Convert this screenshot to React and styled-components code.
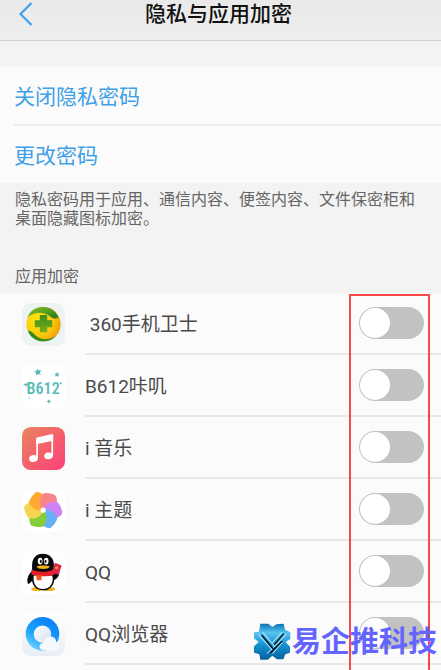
import styled, { createGlobalStyle } from "styled-components";

const apps = [
  { id: "guard", name: "\u00a0360手机卫士", Icon: GuardIcon },
  { id: "b612", name: "B612咔叽", Icon: CameraIcon },
  { id: "music", name: "i 音乐", Icon: MusicIcon },
  { id: "theme", name: "i 主题", Icon: ThemeIcon },
  { id: "qq", name: "QQ", Icon: PenguinIcon },
  { id: "browser", name: "QQ浏览器", Icon: BrowserIcon },
];

export default function App() {
  return (
    <>
      <GlobalStyle />
      <Page>
        <Header>
          <BackButton type="button" aria-label="返回">
            <svg width="14" height="24" viewBox="0 0 14 24" fill="none">
              <path d="M12.5 1 1.5 12l11 11" stroke="#3fa0f0" strokeWidth="2.2" />
            </svg>
          </BackButton>
          <Title>隐私与应用加密</Title>
        </Header>
        <Actions>
          <ActionLink href="#close">关闭隐私密码</ActionLink>
          <ActionLink href="#change">更改密码</ActionLink>
        </Actions>
        <Note>隐私密码用于应用、通信内容、便签内容、文件保密柜和桌面隐藏图标加密。</Note>
        <SectionTitle>应用加密</SectionTitle>
        <AppList>
          {apps.map(({ id, name, Icon }) => (
            <AppRow key={id}>
              <Icon />
              <RowBody>
                <AppName htmlFor={id}>{name}</AppName>
                <Toggle type="checkbox" id={id} />
              </RowBody>
            </AppRow>
          ))}
          <Highlight />
        </AppList>
        <Watermark>
          <WatermarkLogo />
          易企推科技
        </Watermark>
      </Page>
    </>
  );
}

function GuardIcon() {
  return (
    <AppIcon viewBox="0 0 128 128">
      <defs>
        <radialGradient id="gold" cx="0.35" cy="0.4" r="0.7">
          <stop offset="0" stopColor="#ffe910" />
          <stop offset="0.6" stopColor="#fcc90c" />
          <stop offset="1" stopColor="#f09a08" />
        </radialGradient>
        <linearGradient id="leaf" x1="0" y1="0" x2="1" y2="1">
          <stop offset="0" stopColor="#8cc020" />
          <stop offset="1" stopColor="#1c7a20" />
        </linearGradient>
        <linearGradient id="cross" x1="0" y1="0" x2="0" y2="1">
          <stop offset="0" stopColor="#3f8f1d" />
          <stop offset="1" stopColor="#75ad1a" />
        </linearGradient>
      </defs>
      <rect width="128" height="128" rx="26" fill="#edf2f3" />
      <circle cx="64" cy="63" r="51" fill="url(#gold)" />
      <path d="M17 42C27 18 47 11 65 12c22 1 38 14 43 31-8 5-15 4-24-3C65 26 39 25 17 42Z" fill="url(#leaf)" />
      <path d="M18 83c6-1 13 4 21 12 16 15 41 19 65 0-12 14-25 19-41 19-21 0-39-13-45-31Z" fill="#348b1c" />
      <path
        d="M55 38h18v15h15v17H73v15H55V70H40V53h15Z"
        fill="url(#cross)"
        stroke="url(#cross)"
        strokeWidth="4"
        strokeLinejoin="round"
      />
    </AppIcon>
  );
}

function CameraIcon() {
  return (
    <AppIcon viewBox="0 0 128 128">
      <rect width="128" height="128" rx="26" fill="#fff" />
      <g fill="#55b9b5">
        <LogoText x="63" y="85" textAnchor="middle">
          B612
        </LogoText>
        <path d="m46 10 3 6 8-1-4 7 3 7-8-2-7 4 1-8-6-5 8-1ZM104 20l2 5 6 1-4 4 1 5-5-2-5 2 1-5-4-4 6-1ZM12 52l2 4 5 3-5 2-2 5-2-5-5-2 5-3ZM80 102l2 4 5 3-5 2-2 5-2-5-5-2 5-3Z" />
        <circle cx="115" cy="54" r="3" />
        <circle cx="21" cy="99" r="2" />
      </g>
    </AppIcon>
  );
}

function MusicIcon() {
  return (
    <AppIcon viewBox="0 0 128 128">
      <defs>
        <linearGradient id="coral" x1="0" y1="0" x2="1" y2="1">
          <stop offset="0" stopColor="#e8865f" />
          <stop offset="0.5" stopColor="#f4616a" />
          <stop offset="1" stopColor="#fc4079" />
        </linearGradient>
      </defs>
      <rect width="128" height="128" rx="26" fill="url(#coral)" />
      <path d="M42 35q0-3 3-4l45-10q3 0 3 3v17L42 51Z" fill="#fff" />
      <path d="M45 40v53M90 28v57" stroke="#fff" strokeWidth="5" />
      <ellipse cx="34" cy="94" rx="13" ry="10" fill="#fff" transform="rotate(-12 34 94)" />
      <ellipse cx="79" cy="86" rx="13" ry="10" fill="#fff" transform="rotate(-12 79 86)" />
    </AppIcon>
  );
}

const petals = [
  { color: "#f9858c", edge: "#ee6270", angle: 0 },
  { color: "#cc84f6", edge: "#a866ea", angle: 60 },
  { color: "#66b0f6", edge: "#4a8ce6", angle: 120 },
  { color: "#86cc36", edge: "#4dab2c", angle: 180 },
  { color: "#f6d552", edge: "#e0b03a", angle: 240 },
  { color: "#fda934", edge: "#f08a2c", angle: 300 },
];

function ThemeIcon() {
  return (
    <AppIcon viewBox="0 0 128 128">
      <rect width="128" height="128" rx="26" fill="#fff" />
      {petals.map(({ color, edge, angle }) => (
        <g key={angle} transform={`rotate(${angle} 63 63)`}>
          <path d="M63 63C50 50 50 32 61 17q3-4 8-4 14-1 26 3 7 3 8 11 2 12 1 30C92 54 76 56 63 63Z" fill={color} />
          <path d="M63 63c6-14 20-18 41-18v12C92 54 76 56 63 63Z" fill={edge} opacity="0.6" />
        </g>
      ))}
      <path d="M63 63C50 50 50 32 61 17q3-4 8-4h12C72 28 68 44 63 63Z" fill="#f9858c" />
      <circle cx="63" cy="63" r="8" fill="#fff" />
    </AppIcon>
  );
}

function PenguinIcon() {
  return (
    <AppIcon viewBox="0 0 128 128">
      <rect width="128" height="128" rx="26" fill="#fff" />
      <ellipse cx="46" cy="113" rx="19" ry="6" fill="#f5ae16" />
      <ellipse cx="80" cy="113" rx="19" ry="6" fill="#f5ae16" />
      <path d="M29 60C15 73 14 89 18 98c5 0 9-5 12-10 2 18 15 29 33 29s31-12 33-31c8-3 16-12 15-25l-16-3Z" fill="#050608" />
      <path d="M62 8c-20 0-32 14-32 33v24h65V41C95 22 82 8 62 8Z" fill="#08090c" />
      <path d="M35 73h55c6 22-7 40-28 40S32 95 35 73Z" fill="#fff" />
      <ellipse cx="54" cy="30" rx="7" ry="10" fill="#fff" />
      <ellipse cx="72" cy="30" rx="7" ry="10" fill="#fff" />
      <ellipse cx="56" cy="31" rx="3" ry="5" fill="#111" />
      <ellipse cx="70" cy="31" rx="3" ry="5" fill="#111" />
      <path d="M43 46c10-4 30-4 40 0-4 10-36 10-40 0Z" fill="#f7b21b" />
      <path d="M28 55c21 9 47 9 68-1l2 15c-22 9-50 8-70 1Z" fill="#e6202b" />
      <path d="M42 72h16v15H44Z" fill="#ef5a1e" />
      <path d="m98 35 20 8-9 28-21-6Z" fill="#db234c" />
      <circle cx="103" cy="50" r="4" fill="#f7a52a" />
    </AppIcon>
  );
}

function BrowserIcon() {
  return (
    <AppIcon viewBox="0 0 128 128">
      <defs>
        <linearGradient id="tile" x1="0" y1="0" x2="0" y2="1">
          <stop offset="0" stopColor="#fff" />
          <stop offset="1" stopColor="#e9eef5" />
        </linearGradient>
        <linearGradient id="ring" x1="0.8" y1="0" x2="0.2" y2="1">
          <stop offset="0" stopColor="#087bf5" />
          <stop offset="0.6" stopColor="#1ca3fb" />
          <stop offset="1" stopColor="#78d5fd" />
        </linearGradient>
        <linearGradient id="hole" x1="0" y1="0" x2="1" y2="1">
          <stop offset="0" stopColor="#fff" />
          <stop offset="1" stopColor="#d5dfea" />
        </linearGradient>
      </defs>
      <rect width="128" height="128" rx="26" fill="url(#tile)" />
      <circle cx="61" cy="62" r="50" fill="url(#ring)" />
      <circle cx="61" cy="63" r="26" fill="url(#hole)" />
      <path d="M64 111c-8 0-12-5-12-11s5-11 12-11c2-13 11-20 21-19 10 0 16 7 17 16 8 1 10 7 10 12 0 8-5 13-12 13Z" fill="#f4f9fd" />
    </AppIcon>
  );
}

function WatermarkLogo() {
  return (
    <svg width="38" height="38" viewBox="0 0 114 114">
      <defs>
        <linearGradient id="steel" x1="0" y1="0" x2="0" y2="1">
          <stop offset="0" stopColor="#0671b4" />
          <stop offset="0.25" stopColor="#58c4ef" />
          <stop offset="0.6" stopColor="#1491cf" />
          <stop offset="1" stopColor="#05609f" />
        </linearGradient>
      </defs>
      <path
        d="M22 2h24l12 10 12-8 22-2 4 18 16 8v20L98 57l13 14v18l-14 5-6 15H72L58 98l-14 12H22l-3-16-16-5V70l14-13L3 46V28l15-2Z"
        fill="url(#steel)"
      />
      <g fill="none">
        <path d="m16 34 44 50M30 28l34 42M86 28 58 60M100 34 42 92M88 58 59 92" stroke="#d5f1fc" strokeWidth="3" />
        <path d="m26 36 36 43M92 32 64 65M88 54 52 90" stroke="#06131f" strokeWidth="4" />
      </g>
    </svg>
  );
}

const GlobalStyle = createGlobalStyle`
  * {
    box-sizing: border-box;
  }

  body {
    margin: 0;
    background: #f3f3f3;
    color: #4a4a4a;
    font-family: Roboto, "Noto Sans CJK SC", sans-serif;
  }
`;

const Page = styled.main`
  position: relative;
  display: flex;
  flex-direction: column;
  min-height: 100vh;
`;

const Header = styled.header`
  display: grid;
  grid-template-columns: 44px 1fr 48px;
  padding: 1px 0 13px;
  border-bottom: 1px solid #d2d2d2;
  background: linear-gradient(#e9e9e9, #eeeeee);
`;

const BackButton = styled.button`
  display: flex;
  align-items: center;
  padding: 0 0 0 19px;
  border: none;
  background: none;
  cursor: pointer;
`;

const Title = styled.h1`
  margin: 0;
  color: #111;
  font-size: 21px;
  font-weight: 500;
  line-height: 26px;
  text-align: center;
`;

const Actions = styled.nav`
  display: flex;
  flex-direction: column;
  margin-top: 26px;
  padding-left: 14px;
  background: #fbfbfb;
`;

const ActionLink = styled.a`
  padding-top: 4px;
  color: #3fa0e8;
  font-size: 21px;
  line-height: 53px;
  text-decoration: none;

  & + & {
    border-top: 2px solid #ebebeb;
  }
`;

const Note = styled.p`
  margin: 0;
  padding: 7px 15px 0;
  color: #666;
  font-size: 16px;
  line-height: 19px;
`;

const SectionTitle = styled.h2`
  margin: 0;
  padding: 38px 15px 6px;
  color: #666;
  font-size: 16px;
  font-weight: 400;
  line-height: 21px;
`;

const AppList = styled.section`
  position: relative;
  flex: 1;
  background: #fbfbfb;
`;

const AppRow = styled.div`
  display: flex;
  align-items: center;
  gap: 20px;
  padding-left: 22px;
`;

const AppIcon = styled.svg`
  flex: none;
  width: 43px;
  height: 43px;
`;

const LogoText = styled.text`
  font-family: "Roboto Condensed", "Open Sans Condensed", "DejaVu Sans Condensed", Roboto, sans-serif;
  font-size: 48px;
  font-weight: 500;
`;

const RowBody = styled.div`
  display: flex;
  flex: 1;
  align-items: center;
  justify-content: space-between;
  height: 62px;
  padding-right: 17px;
  border-bottom: 2px solid #e8e8e8;
`;

const AppName = styled.label`
  padding-top: 4px;
  font-size: 19px;
  line-height: 24px;
`;

const Toggle = styled.input`
  appearance: none;
  width: 65px;
  height: 32px;
  margin: 0;
  padding: 1px;
  border-radius: 16px;
  background: #c2c2c2;
  cursor: pointer;

  &::before {
    content: "";
    display: block;
    width: 30px;
    height: 30px;
    border-radius: 50%;
    background: #fff;
  }

  &:checked {
    background: #3fa0e8;
  }

  &:checked::before {
    margin-left: auto;
  }
`;

const Highlight = styled.div`
  position: absolute;
  top: 1px;
  right: 11px;
  bottom: 0;
  width: 81px;
  border: 2px solid #f94848;
  border-bottom: none;
  pointer-events: none;
`;

const Watermark = styled.div`
  position: absolute;
  right: 4px;
  bottom: 9px;
  display: flex;
  gap: 1px;
  align-items: center;
  color: #6464ff;
  font-size: 29px;
  font-weight: 700;
  line-height: 38px;
  pointer-events: none;
`;
